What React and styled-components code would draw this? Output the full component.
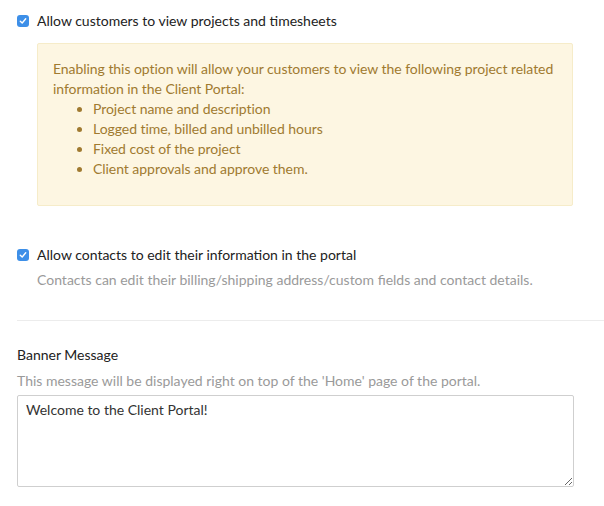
import React from "react";
import styled, { createGlobalStyle } from "styled-components";

const Global = createGlobalStyle`
  html, body { margin: 0; padding: 0; background: #fff; }
  body { font-family: Lato, "Open Sans", sans-serif; font-size: 14px; color: #333; }
  * { box-sizing: border-box; }
`;

const Page = styled.div`
  padding: 11px 0 0 17px;
  width: 604px;
`;

const CheckRow = styled.label`
  display: flex;
  align-items: center;
  gap: 8px;
  height: 20px;
  line-height: 20px;
  color: #222;
  font-size: 14px;
`;

const Box = styled.span`
  width: 12px;
  height: 12px;
  border-radius: 3px;
  background: #3d8fe8;
  display: inline-flex;
  align-items: center;
  justify-content: center;
  flex: none;
`;

const Check = () => (
  <Box>
    <svg width="8" height="8" viewBox="0 0 8 8">
      <path d="M1.3 4.2 L3.2 6 L6.7 1.8" fill="none" stroke="#fff" strokeWidth="1.4" strokeLinecap="round" strokeLinejoin="round" />
    </svg>
  </Box>
);

const Indent = styled.div`
  margin-left: 20px;
  width: 536px;
`;

const Notice = styled.div`
  margin-top: 12px;
  background: #fdf6e2;
  border: 1px solid #f6ecc9;
  border-radius: 2px;
  padding: 15px 4px 26px 15px;
  color: #a07a30;
  font-size: 14px;
  line-height: 20px;
  letter-spacing: -0.05px;
`;

const List = styled.ul`
  margin: 0;
  padding-left: 40px;
`;

const Section = styled.div`
  margin-top: ${(p) => p.$top}px;
`;

const Help = styled.div`
  color: #9a9a9a;
  font-size: 14px;
  line-height: 20px;
  margin-top: ${(p) => p.$top || 0}px;
`;

const Divider = styled.hr`
  border: 0;
  border-top: 1px solid #ececec;
  margin: 30px 0 0 0;
`;

const Title = styled.div`
  margin-top: 24px;
  color: #222;
  font-size: 14px;
  line-height: 20px;
`;

const TextArea = styled.textarea`
  display: block;
  margin-top: 4px;
  width: 557px;
  height: 92px;
  border: 1px solid #cfcfcf;
  border-radius: 2px;
  padding: 5px 8px;
  font-family: Lato, "Open Sans", sans-serif;
  font-size: 14px;
  line-height: 18px;
  color: #333;
  resize: both;
  outline: none;
`;

export default function App() {
  return (
    <>
      <Global />
      <Page>
        <CheckRow>
          <Check />
          Allow customers to view projects and timesheets
        </CheckRow>
        <Indent>
          <Notice>
            Enabling this option will allow your customers to view the following project related information in the Client Portal:
            <List>
              <li>Project name and description</li>
              <li>Logged time, billed and unbilled hours</li>
              <li>Fixed cost of the project</li>
              <li>Client approvals and approve them.</li>
            </List>
          </Notice>
        </Indent>
        <Section $top={39}>
          <CheckRow>
            <Check />
            Allow contacts to edit their information in the portal
          </CheckRow>
          <Indent>
            <Help $top={5}>Contacts can edit their billing/shipping address/custom fields and contact details.</Help>
          </Indent>
        </Section>
        <Divider />
        <Title>Banner Message</Title>
        <Help $top={6}>This message will be displayed right on top of the 'Home' page of the portal.</Help>
        <TextArea defaultValue="Welcome to the Client Portal!" />
      </Page>
    </>
  );
}
